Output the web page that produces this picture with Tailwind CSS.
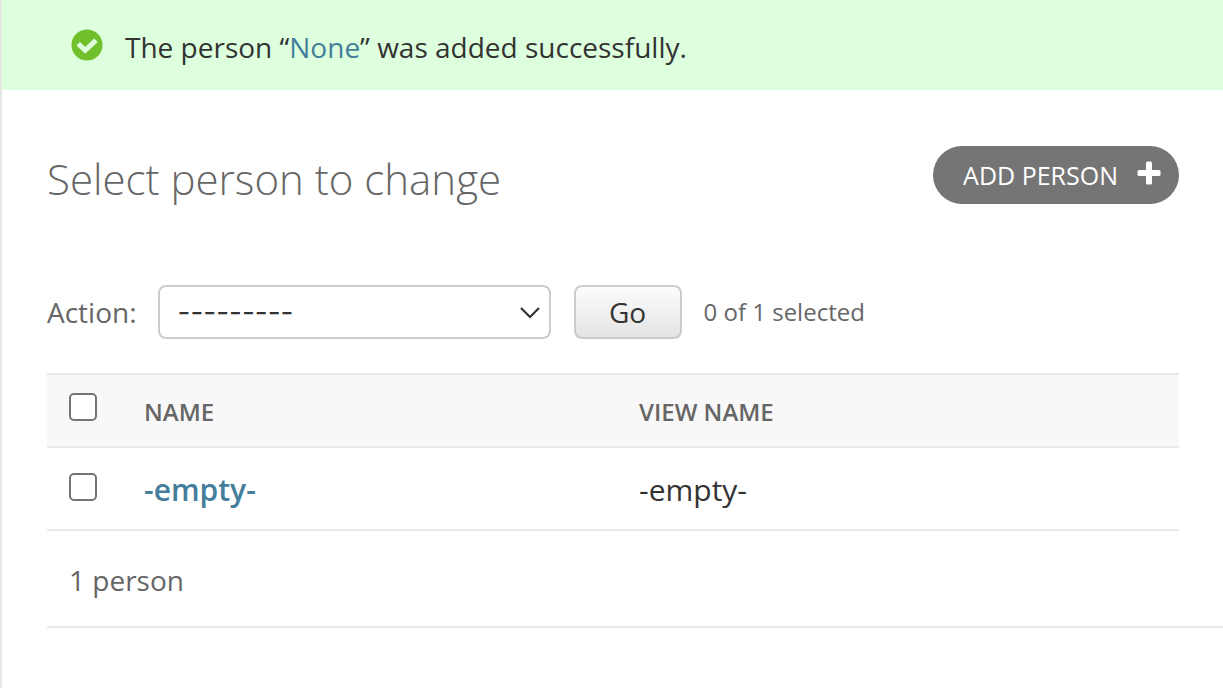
<!DOCTYPE html>
<html lang="en">
<head>
    <meta charset="UTF-8">
    <meta name="viewport" content="width=device-width, initial-scale=1.0">
    <title>Select person to change</title>
    <script src="https://cdn.jsdelivr.net/npm/@tailwindcss/browser@4"></script>
</head>
<body class="min-h-screen border-l-2 border-[#e6e6e6] bg-white font-['Open_Sans','Noto_Sans',sans-serif] text-[28px] leading-[40px] text-[#333]">
    <!-- Messages -->
    <div class="flex h-[90px] items-center gap-[22px] bg-[#ddffdd] pl-[69px]" role="status">
        <svg class="size-8 shrink-0" viewBox="0 0 32 32" aria-hidden="true">
            <circle cx="16" cy="16" r="15.5" fill="#70bf2b"/>
            <path d="M7.2 14.8 L14.2 21.4 L25 11.2" fill="none" stroke="#ddffdd" stroke-width="5"/>
        </svg>
        <p class="pt-1">The person “<a href="#" class="text-[#447e9b]">None</a>” was added successfully.</p>
    </div>

    <main class="pl-[45px]">
        <div class="flex items-center justify-between pt-14 pr-11">
            <h1 class="pt-2 text-[42px] leading-[50px] font-light text-[#666]">Select person to change</h1>
            <a href="#" class="flex h-[58px] items-center gap-[19px] rounded-full bg-[#757575] pr-[18px] pl-[30px] text-[25px] text-white uppercase">
                Add person
                <svg class="mb-1 size-6" viewBox="0 0 24 24" fill="#fff" aria-hidden="true">
                    <rect x="9" y="0.5" width="6" height="23" rx="1.5"/>
                    <rect x="0.5" y="9" width="23" height="6" rx="1.5"/>
                </svg>
            </a>
        </div>

        <form>
            <!-- Actions -->
            <div class="flex items-center pt-[81px] pb-[34px] text-[#666]">
                <label for="action">Action:</label>
                <div class="relative ml-[21px] w-[393px]">
                    <select id="action" class="h-[54px] w-full appearance-none rounded-lg border-2 border-[#ccc] bg-white pl-[18px] font-['Inter',sans-serif] text-[#333]">
                        <option>---------</option>
                    </select>
                    <svg class="pointer-events-none absolute top-5 right-2.5 h-[14px] w-[22px]" viewBox="0 0 22 14" fill="none" stroke="#333" stroke-width="2.2" aria-hidden="true">
                        <path d="M2 3 L11 12 L20 3"/>
                    </svg>
                </div>
                <button type="button" class="ml-[23px] h-[54px] w-[108px] rounded-lg border-2 border-[#ccc] bg-linear-to-b from-[#fcfcfc] to-[#e4e4e4] text-[#333]">Go</button>
                <span class="ml-[22px] text-[24px]">0 of 1 selected</span>
            </div>

            <!-- Results -->
            <div class="pr-11">
                <table class="w-full table-fixed border-collapse text-left">
                    <thead class="border-y-2 border-[#e8e8e8] bg-[#f8f8f8] text-[24px] text-[#666] uppercase">
                        <tr class="h-[73px]">
                            <th class="w-[97px] pl-[22px]">
                                <input type="checkbox" aria-label="Select all people" class="mb-2 block size-7 appearance-none rounded-[5px] border-2 border-[#757575] bg-white">
                            </th>
                            <th class="w-[495px] pt-0.5 font-semibold">Name</th>
                            <th class="pt-0.5 font-semibold">View name</th>
                        </tr>
                    </thead>
                    <tbody>
                        <tr class="h-[83px] border-b-2 border-[#e8e8e8]">
                            <td class="pl-[22px]">
                                <input type="checkbox" aria-label="Select -empty-" class="mb-1 block size-7 appearance-none rounded-[5px] border-2 border-[#757575] bg-white">
                            </td>
                            <th class="pt-0.5 text-[30px] font-semibold"><a href="#" class="text-[#447e9b]">-empty-</a></th>
                            <td class="pt-0.5 text-[30px]">-empty-</td>
                        </tr>
                    </tbody>
                </table>
            </div>

            <p class="border-b-2 border-[#e8e8e8] pt-[29px] pb-[26px] pl-[22px] text-[#666]">1 person</p>
        </form>
    </main>
</body>
</html>
